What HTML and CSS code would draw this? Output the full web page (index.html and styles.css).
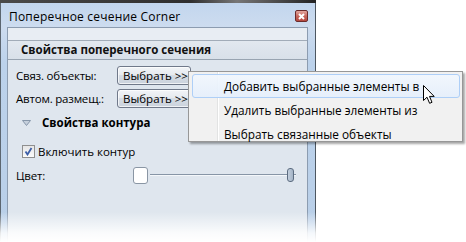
FILE: index.html
```html
<!DOCTYPE html>
<html lang="ru">
<head>
    <meta charset="UTF-8">
    <title>Поперечное сечение Corner</title>
    <link rel="stylesheet" href="styles.css">
</head>
<body>
    <div class="desk"></div>
    <div class="window">
        <div class="titlebar">
            <span class="title">Поперечное сечение Corner</span>
            <span class="close">
                <svg width="7" height="7" viewBox="0 0 7 7"><path d="M1 1 L6 6 M6 1 L1 6" stroke="#fff" stroke-width="2"/></svg>
            </span>
        </div>
        <div class="panel">
            <div class="topband"></div>
            <div class="section-head">Свойства поперечного сечения</div>
            <div class="row">
                <span class="label">Связ. объекты:</span>
                <button class="pick">Выбрать &gt;&gt;</button>
            </div>
            <div class="row">
                <span class="label">Автом. размещ.:</span>
                <button class="pick">Выбрать &gt;&gt;</button>
            </div>
            <div class="group">
                <svg class="arrow" width="9" height="6" viewBox="0 0 9 6"><path d="M0.5 0.5 L8.5 0.5 L4.5 5.5 Z" fill="#c6d0dc" stroke="#8797aa"/></svg>
                <span>Свойства контура</span>
            </div>
            <div class="check-row">
                <span class="checkbox">
                    <svg width="9" height="9" viewBox="0 0 9 9"><path d="M1.5 4.5 L3.5 7.5 L7.5 1" fill="none" stroke="#3d5fa8" stroke-width="1.8"/></svg>
                </span>
                <span>Включить контур</span>
            </div>
            <div class="color-row">
                <span class="label">Цвет:</span>
                <span class="swatch"></span>
                <div class="slider">
                    <div class="track"></div>
                    <div class="thumb"></div>
                </div>
            </div>
        </div>
        <div class="fade"></div>
    </div>

    <div class="menu">
        <div class="item active">Добавить выбранные элементы в</div>
        <div class="item">Удалить выбранные элементы из</div>
        <div class="item">Выбрать связанные объекты</div>
    </div>

    <svg class="cursor" width="13" height="20" viewBox="0 0 13 20">
        <path d="M0.5 0.5 L0.5 15.5 L4 12.2 L6.6 18.3 L9 17.3 L6.5 11.4 L11.2 11.4 Z" fill="#fff" stroke="#000" stroke-width="1"/>
    </svg>
</body>
</html>
```

FILE: styles.css
```css
body {
    margin: 0;
    background-color: #fff;
    font-family: "Open Sans", "Liberation Sans", sans-serif;
    font-size: 11.5px;
    color: #000;
    position: relative;
    width: 466px;
    height: 242px;
    overflow: hidden;
}
.desk {
    width: 316px;
    height: 3px;
    background: linear-gradient(90deg, #4a4a4a, #2e2e2e 60%, #777 75%, #222);
}
.window {
    width: 314px;
    height: 239px;
    border-left: 1px solid #5c6670;
    border-right: 1px solid #4d5761;
    background: linear-gradient(180deg, #c2d6ee 0px, #cddcef 24px, #bcd2eb 60px, #b9cfe8);
    display: flex;
    flex-direction: column;
    position: relative;
}
.titlebar {
    height: 24px;
    display: flex;
    align-items: center;
    justify-content: space-between;
    padding: 0 7px 0 8px;
}
.title {
    font-size: 12px;
    letter-spacing: 0.2px;
    color: #000;
    padding-top: 2px;
}
.close {
    width: 11px;
    height: 10px;
    border: 1px solid #6b2b2b;
    border-radius: 2px;
    background: linear-gradient(180deg, #e3a7a0, #c7675d 50%, #b5483f);
    display: flex;
    align-items: center;
    justify-content: center;
    margin-top: 2px;
}
.panel {
    flex: 1;
    margin: 0 7px 0 6px;
    border: 1px solid #8c9cb0;
    border-bottom: none;
    background-color: #dfe6ee;
}
.topband {
    height: 12px;
    background-color: #e8edf3;
    border-bottom: 1px solid #a2acb8;
}
.section-head {
    height: 18px;
    line-height: 18px;
    padding-left: 13px;
    font-weight: bold;
    font-size: 11.5px;
    background: linear-gradient(180deg, #e2e8ef, #d8e0e9);
    border-bottom: 1px solid #98a4b1;
    color: #111;
}
.row {
    display: flex;
    align-items: center;
    height: 23px;
    padding-left: 8px;
}
.section-head + .row {
    margin-top: 4px;
}
.label {
    width: 101px;
    letter-spacing: -0.2px;
}
.pick {
    width: 74px;
    height: 19px;
    padding: 0 0 0 5px;
    text-align: left;
    font-family: inherit;
    font-size: 11.5px;
    color: #000;
    border: 1px solid #70798a;
    border-radius: 3px;
    background: linear-gradient(180deg, #f2f4f7 0%, #e6eaef 45%, #d6dce4 50%, #cbd3dd 100%);
    box-shadow: inset 0 0 0 1px rgba(255,255,255,0.7);
}
.group {
    display: flex;
    align-items: center;
    height: 24px;
    padding-left: 14px;
    font-weight: bold;
}
.arrow {
    margin-right: 11px;
    margin-top: 1px;
}
.check-row {
    display: flex;
    align-items: center;
    height: 22px;
    padding-left: 14px;
    margin-top: 6px;
}
.checkbox {
    width: 11px;
    height: 11px;
    border: 1px solid #8f8f8f;
    background: linear-gradient(180deg, #e6e6e6, #fbfbfb);
    display: flex;
    align-items: center;
    justify-content: center;
    margin-right: 3px;
}
.color-row {
    display: flex;
    align-items: center;
    height: 22px;
    padding-left: 8px;
    margin-top: 2px;
}
.color-row .label {
    width: 117px;
}
.swatch {
    width: 13px;
    height: 15px;
    border: 1px solid #8a96a4;
    border-radius: 3px;
    background-color: #fff;
}
.slider {
    position: relative;
    width: 146px;
    height: 14px;
    margin-left: 2px;
    display: flex;
    align-items: center;
}
.track {
    width: 100%;
    height: 1px;
    background-color: #8795a6;
    border-bottom: 1px solid #f4f7fa;
}
.thumb {
    position: absolute;
    left: 137px;
    top: 0;
    width: 5px;
    height: 12px;
    border: 1px solid #5c6c80;
    border-radius: 3px;
    background: linear-gradient(90deg, #c2cedc, #a3b3c6);
}
.fade {
    position: absolute;
    left: -1px;
    right: -1px;
    bottom: 0;
    height: 30px;
    background: linear-gradient(180deg, rgba(255,255,255,0), rgba(255,255,255,0.85) 70%, #fff);
}
.menu {
    position: absolute;
    left: 188px;
    top: 71px;
    padding: 2px 0 0 3px;
    box-sizing: border-box;
    width: 275px;
    height: 71px;
    border: 1px solid #979797;
    background: linear-gradient(90deg, #f1f1f1 28px, #e2e3e3 28px, #e2e3e3 29px, #fff 29px, #fff 30px, #f1f1f1 30px);
    box-shadow: 2px 2px 2px rgba(0,0,0,0.35);
}
.item {
    height: 22px;
    line-height: 22px;
    padding-left: 31px;
    margin-right: 2px;
    border: 1px solid transparent;
    border-radius: 3px;
    font-size: 11.8px;
}
.item.active {
    border-color: #aecff7;
    background: linear-gradient(180deg, rgba(241,247,254,0.9), rgba(229,239,252,0.9));
}
.cursor {
    position: absolute;
    left: 423px;
    top: 85px;
}
```
